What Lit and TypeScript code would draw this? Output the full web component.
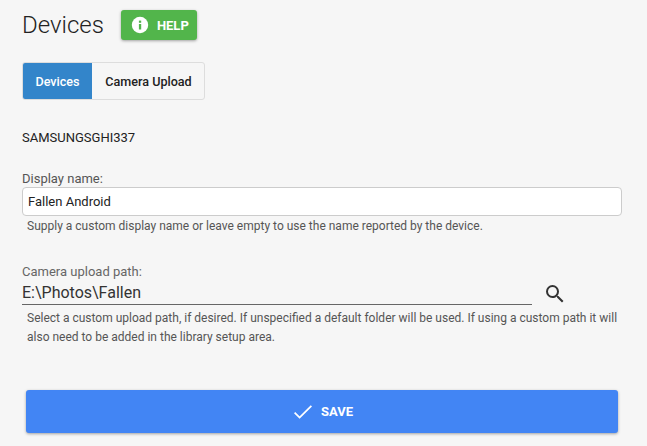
import { LitElement, html, css } from "lit";
import { customElement } from "lit/decorators.js";

@customElement("app-root")
export class AppRoot extends LitElement {
  static styles = css`
    :host {
      display: block;
      width: 647px;
      height: 446px;
      overflow: hidden;
      background: #f6f6f6;
      font-family: Roboto, sans-serif;
      color: #222;
      box-sizing: border-box;
    }
    .page {
      padding: 10px 25px 0 22px;
      display: flex;
      flex-direction: column;
    }
    .head {
      display: flex;
      align-items: center;
      gap: 17px;
      height: 30px;
    }
    h1 {
      margin: 0;
      font-size: 24px;
      font-weight: 300;
      color: #222;
      line-height: 30px;
    }
    .help {
      display: flex;
      align-items: center;
      gap: 8px;
      width: 76px;
      height: 30px;
      padding-left: 10px;
      box-sizing: border-box;
      background: #52b54b;
      color: #fff;
      border-radius: 3px;
      font-size: 13px;
      font-weight: 700;
      box-shadow: 0 1px 3px rgba(0, 0, 0, 0.35);
    }
    .tabs {
      display: flex;
      margin-top: 22px;
      width: 183px;
      height: 38px;
      box-sizing: border-box;
      border: 1px solid #ddd;
      border-radius: 3px;
      overflow: hidden;
      font-size: 12.6px;
      font-weight: 500;
    }
    .tab {
      display: flex;
      align-items: center;
      justify-content: center;
    }
    .tab.on {
      width: 69px;
      background: #3385ca;
      color: #fff;
    }
    .tab.off {
      flex: 1;
      color: #222;
      padding-left: 1px;
    }
    .serial {
      margin-top: 30px;
      font-size: 13px;
      line-height: 16px;
      color: #222;
    }
    .label {
      font-size: 13px;
      line-height: 16px;
      color: #555;
    }
    .label.first {
      margin-top: 25px;
    }
    .input {
      width: 600px;
      height: 29px;
      box-sizing: border-box;
      background: #fff;
      border: 1px solid #ccc;
      border-radius: 4px;
      padding-left: 5px;
      display: flex;
      align-items: center;
      font-size: 13px;
      color: #222;
    }
    .hint {
      font-size: 12px;
      line-height: 16px;
      color: #555;
      margin-top: 2px;
      padding-left: 5px;
    }
    .label.second {
      margin-top: 30px;
      color: #666;
    }
    .path-row {
      display: flex;
      align-items: flex-start;
      margin-top: 2px;
    }
    .path {
      width: 510px;
      height: 23px;
      box-sizing: border-box;
      border-bottom: 1px solid #666;
      font-size: 16px;
      line-height: 21px;
      color: #333;
    }
    .search {
      margin-left: 11px;
      margin-top: 0;
      display: block;
    }
    .hint2 {
      margin-top: 3px;
      padding-left: 5px;
      width: 599px;
      box-sizing: border-box;
      font-size: 12px;
      line-height: 19px;
      color: #555;
    }
    .save {
      margin: 43px 0 0 4px;
      width: 592px;
      height: 43px;
      padding-left: 3px;
      box-sizing: border-box;
      background: #4285f4;
      color: #fff;
      border-radius: 3px;
      display: flex;
      align-items: center;
      justify-content: center;
      gap: 9px;
      font-size: 13px;
      font-weight: 700;
      box-shadow: 0 1px 3px rgba(0, 0, 0, 0.35);
    }
  `;

  render() {
    return html`
      <div class="page">
        <div class="head">
          <h1>Devices</h1>
          <div class="help">
            <svg width="18" height="18" viewBox="0 0 18 18">
              <circle cx="9" cy="9" r="8.2" fill="#fff"></circle>
              <rect x="7.9" y="8" width="2.3" height="5.5" fill="#52b54b"></rect>
              <rect x="7.9" y="4.6" width="2.3" height="2.2" fill="#52b54b"></rect>
            </svg>
            <span>HELP</span>
          </div>
        </div>
        <div class="tabs">
          <div class="tab on">Devices</div>
          <div class="tab off">Camera Upload</div>
        </div>
        <div class="serial">SAMSUNGSGHI337</div>
        <div class="label first">Display name:</div>
        <div class="input">Fallen Android</div>
        <div class="hint">Supply a custom display name or leave empty to use the name reported by the device.</div>
        <div class="label second">Camera upload path:</div>
        <div class="path-row">
          <div class="path">E:\\Photos\\Fallen</div>
          <svg class="search" width="24" height="24" viewBox="0 0 24 24">
            <path fill="#333" d="M15.5 14h-.79l-.28-.27A6.47 6.47 0 0 0 16 9.5 6.5 6.5 0 1 0 9.5 16c1.61 0 3.09-.59 4.23-1.57l.27.28v.79l5 4.99L20.49 19l-4.99-5zm-6 0C7.01 14 5 11.99 5 9.5S7.01 5 9.5 5 14 7.01 14 9.5 11.99 14 9.5 14z"></path>
          </svg>
        </div>
        <div class="hint2">Select a custom upload path, if desired. If unspecified a default folder will be used. If using a custom path it will also need to be added in the library setup area.</div>
        <div class="save">
          <svg width="18" height="14" viewBox="0 0 18 14">
            <path fill="none" stroke="#fff" stroke-width="1.8" d="M0.6 7.6 L5.6 12.6 L17.4 0.8"></path>
          </svg>
          <span>SAVE</span>
        </div>
      </div>
    `;
  }
}
